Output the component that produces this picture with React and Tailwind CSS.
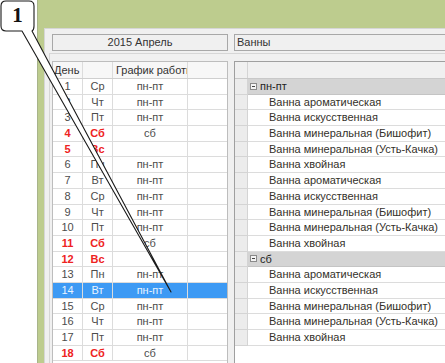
import React from 'react';

const ROW = 'h-[15.7px]';

const days = [
  [1, 'Ср', 'пн-пт'],
  [2, 'Чт', 'пн-пт'],
  [3, 'Пт', 'пн-пт'],
  [4, 'Сб', 'сб', true],
  [5, 'Вс', '', true],
  [6, 'Пн', 'пн-пт'],
  [7, 'Вт', 'пн-пт'],
  [8, 'Ср', 'пн-пт'],
  [9, 'Чт', 'пн-пт'],
  [10, 'Пт', 'пн-пт'],
  [11, 'Сб', 'сб', true],
  [12, 'Вс', '', true],
  [13, 'Пн', 'пн-пт'],
  [14, 'Вт', 'пн-пт', false, true],
  [15, 'Ср', 'пн-пт'],
  [16, 'Чт', 'пн-пт'],
  [17, 'Пт', 'пн-пт'],
  [18, 'Сб', 'сб', true],
];

const baths = [
  'Ванна ароматическая',
  'Ванна искусственная',
  'Ванна минеральная (Бишофит)',
  'Ванна минеральная (Усть-Качка)',
  'Ванна хвойная',
];

const rightRows = [
  { group: 'пн-пт' },
  ...baths.map(t => ({ text: t })),
  ...baths.map(t => ({ text: t })),
  { group: 'сб' },
  ...baths.map(t => ({ text: t })),
];

function DayRow({ day }) {
  const [num, dow, plan, weekend, selected] = day;
  const base = selected ? 'bg-[#3d9af4] text-[#eaf4ff]' : 'bg-white';
  const red = weekend ? 'text-[#ee2222] font-bold' : selected ? '' : 'text-[#4c4c4c]';
  return (
    <div className={`flex ${ROW} shrink-0 border-b border-[#dcdcdc] leading-[14px] ${base}`}>
      <div className={`w-[30px] text-center border-r border-[#dcdcdc] ${red}`}>{num}</div>
      <div className={`w-[30px] text-center border-r border-[#dcdcdc] ${red}`}>{dow}</div>
      <div className={`w-[75px] text-center border-r border-[#dcdcdc] ${selected ? '' : 'text-[#4c4c4c]'}`}>{plan}</div>
      <div className="flex-1" />
    </div>
  );
}

function BathRow({ row }) {
  return (
    <div className={`flex ${ROW} shrink-0 leading-[14px]`}>
      <div className="w-[13px] bg-[#ececec] border-r border-b border-[#d4d4d4]" />
      {row.group ? (
        <div className="flex-1 flex items-center bg-[#d4d4d4] border-b border-[#c4c4c4] pl-[2px] text-[#222]">
          <span className="w-[7px] h-[7px] border border-[#8a8a8a] bg-[#f4f4f4] flex items-center justify-center mr-[3px]">
            <span className="w-[3px] h-px bg-[#444]" />
          </span>
          {row.group}
        </div>
      ) : (
        <div className="flex-1 bg-white border-b border-[#dcdcdc] pl-[21px] text-[#34312a] whitespace-nowrap">
          {row.text}
        </div>
      )}
    </div>
  );
}

export default function App() {
  return (
    <div
      className="w-[445px] h-[363px] bg-white relative overflow-hidden flex text-[11px]"
      style={{ fontFamily: '"Liberation Sans", Arial, sans-serif' }}
    >
      <div className="w-[37px] shrink-0" />
      <div className="flex-1 bg-[#bdcc8e] border-l border-[#a8b48a] pt-[28px] pl-[6px] flex flex-col min-w-0">
        <div className="flex-1 bg-[#f0f0f0] border-t border-l border-[#d6d6d6] flex flex-col min-h-0">
          {/* header boxes */}
          <div className="flex gap-[6px] pt-[5px] pl-[7px] -mr-[4px]">
            <div className="w-[176px] h-[17px] border border-[#a8a8a8] bg-[#f0f0f0] text-center leading-[15px] text-[#333]">
              2015 Апрель
            </div>
            <div className="flex-1 h-[17px] border border-[#a8a8a8] bg-[#f0f0f0] pl-[2px] leading-[15px] text-[#333]">
              Ванны
            </div>
          </div>

          <div className="flex-1 ml-[4px] mt-[2px] border-t border-l border-[#d6d6d6] pt-[7px] pl-[2px] flex gap-[6px] min-h-0">
            {/* days grid */}
            <div className="w-[176px] shrink-0 border-t border-l border-r border-[#bdbdbd] bg-white flex flex-col overflow-hidden">
              <div className="flex h-[17px] shrink-0 border-b border-[#cfcfcf] bg-[#f7f7f7] text-[#333] leading-[16px]">
                <div className="w-[30px] pl-[1px] border-r border-[#dcdcdc]">День</div>
                <div className="w-[30px] border-r border-[#dcdcdc]" />
                <div className="w-[75px] pl-[3px] border-r border-[#dcdcdc] whitespace-nowrap overflow-hidden">График работы</div>
                <div className="flex-1" />
              </div>
              {days.map(d => (
                <DayRow key={d[0]} day={d} />
              ))}
            </div>

            {/* baths grid */}
            <div className="flex-1 border-t border-l border-[#9f9f9f] bg-white flex flex-col overflow-hidden">
              <div className="flex h-[17px] shrink-0 border-b border-[#c8c8c8] bg-[#f0f0f0]">
                <div className="w-[13px] border-r border-[#d4d4d4]" />
                <div className="flex-1" />
              </div>
              {rightRows.map((r, i) => (
                <BathRow key={i} row={r} />
              ))}
              <div className="flex-1" />
            </div>
          </div>
        </div>
      </div>

      {/* callout */}
      <svg className="absolute left-0 top-0 pointer-events-none" width="445" height="363" viewBox="0 0 445 363">
        <path
          d="M22 31 L6 31 Q1 31 1 26 L1 6 Q1 1 6 1 L29 1 Q34 1 34 6 L34 26 Q34 30 32 31 L171 292 Z"
          fill="#ffffff"
          stroke="#1a1a1a"
          strokeWidth="1.1"
          strokeLinejoin="round"
        />
      </svg>
      <div
        className="absolute left-[1px] top-[2px] w-[33px] h-[28px] flex items-center justify-center font-bold text-[21px] text-[#111]"
        style={{ fontFamily: '"Liberation Serif", "Times New Roman", serif' }}
      >
        1
      </div>
    </div>
  );
}
